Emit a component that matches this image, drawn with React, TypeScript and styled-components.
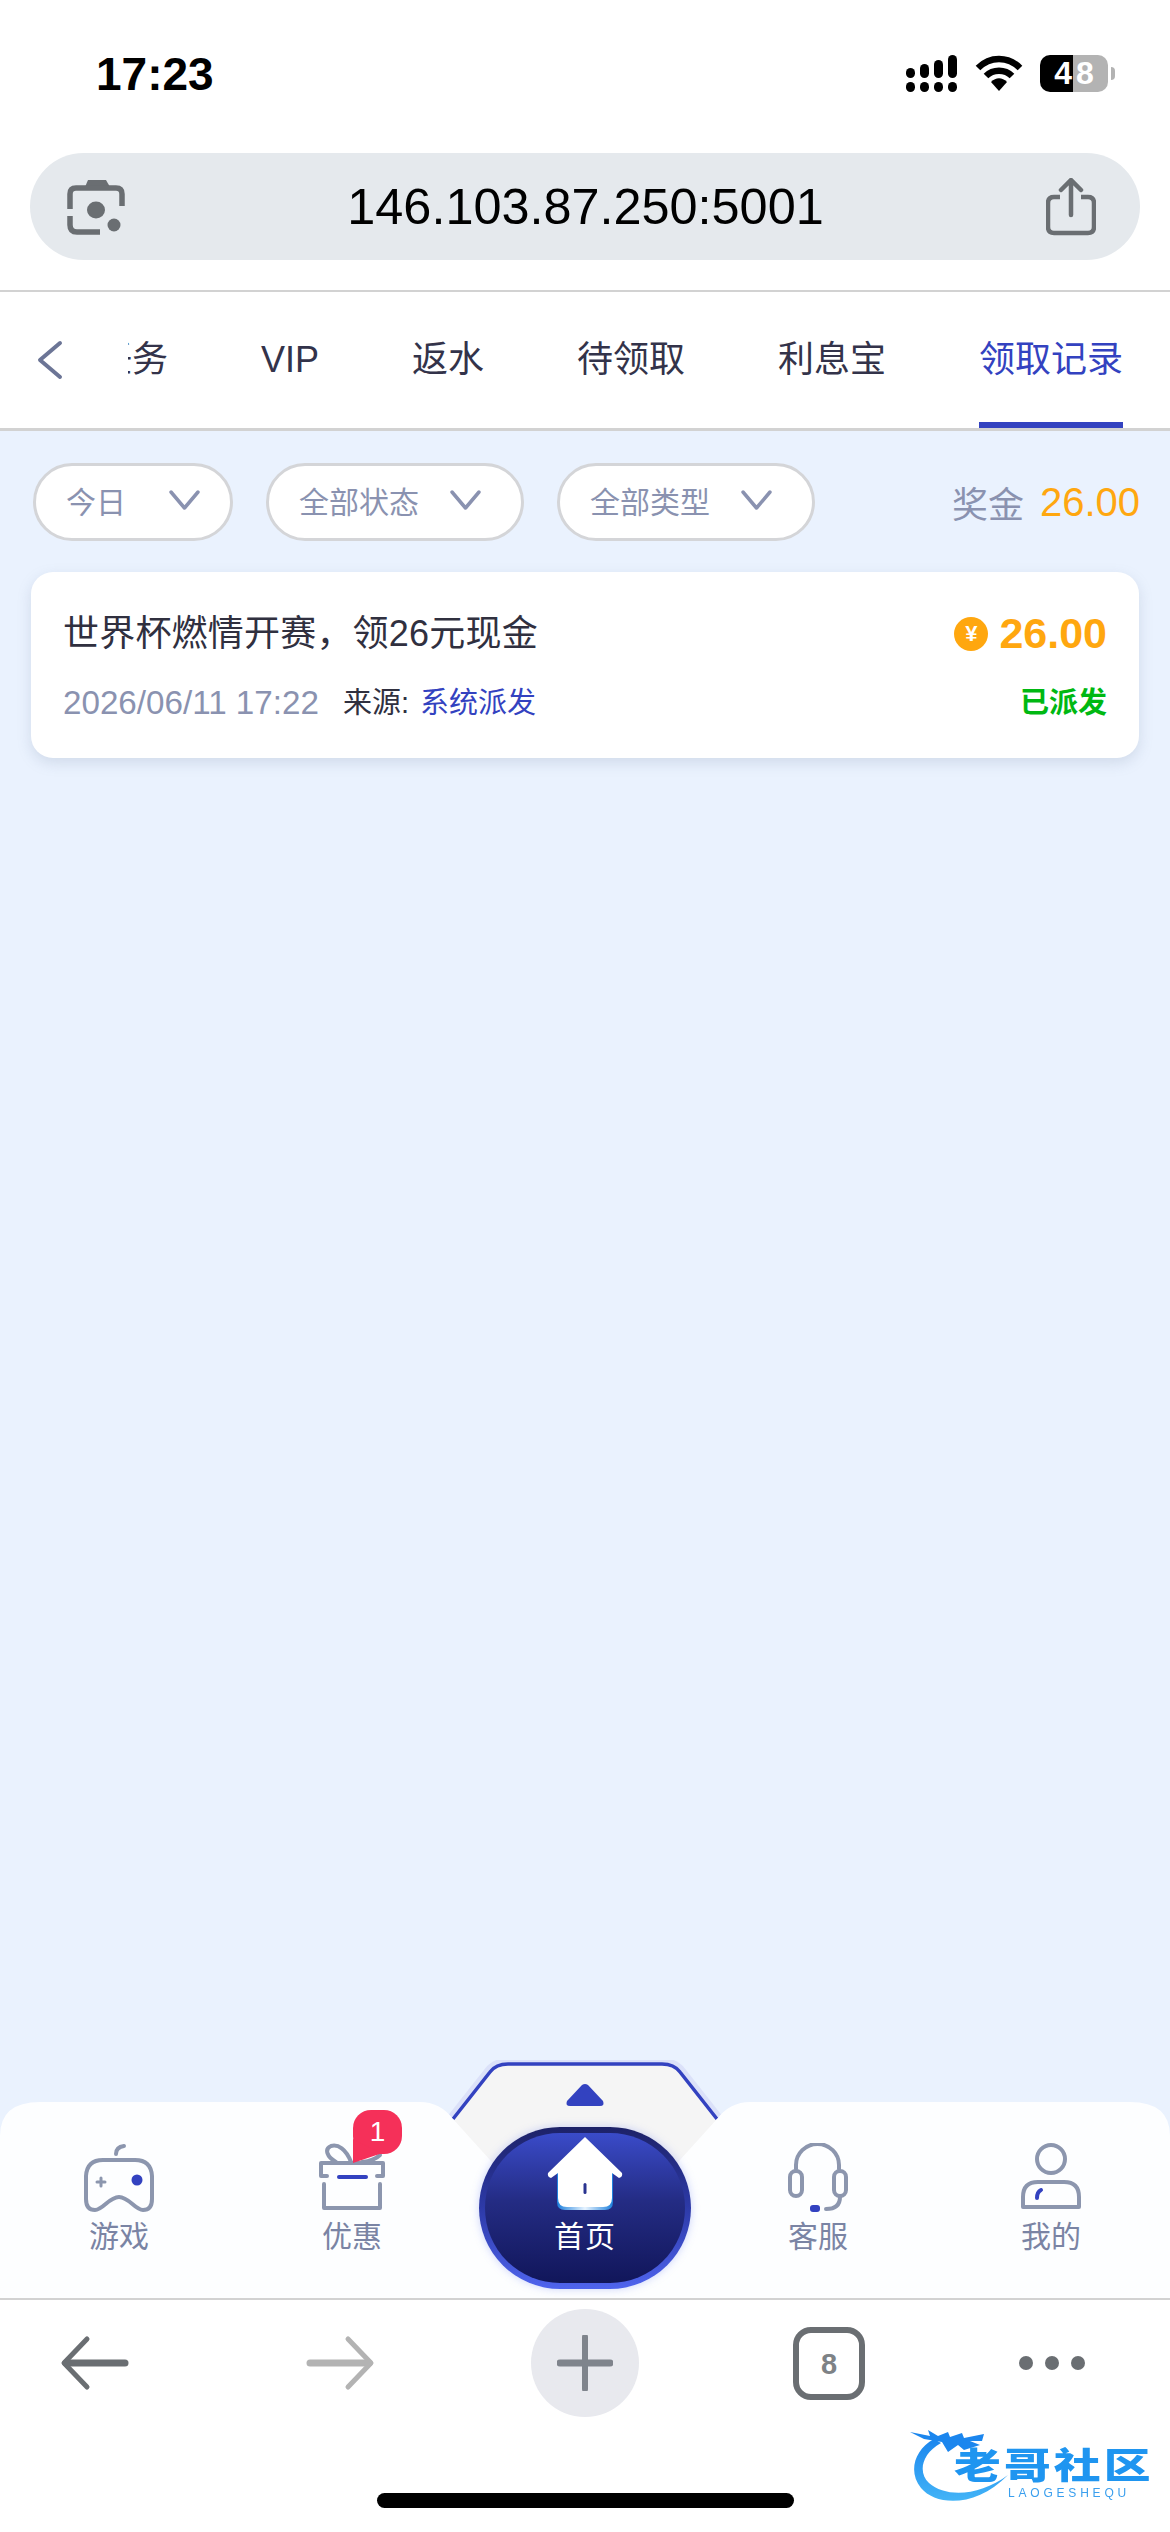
import React from 'react'
import styled, { createGlobalStyle } from 'styled-components'

const FONT = `"Liberation Sans", "Noto Sans CJK SC", sans-serif`

const GlobalStyle = createGlobalStyle`
  html, body {
    margin: 0;
    padding: 0;
    background: #eaf2fe;
  }
  * {
    box-sizing: border-box;
  }
`

const Page = styled.div`
  width: 1170px;
  height: 2532px;
  display: flex;
  flex-direction: column;
  overflow: hidden;
  background: #eaf2fe;
  font-family: ${FONT};
`

const BrowserTop = styled.header`
  height: 292px;
  flex-shrink: 0;
  background: #fff;
  border-bottom: 2px solid #d2d2d2;
  padding: 0 30px;
`

const StatusBar = styled.div`
  height: 153px;
  display: flex;
  justify-content: space-between;
  padding: 46px 25px 0 66px;
`

const Time = styled.div`
  font-size: 46px;
  font-weight: 700;
  line-height: 56px;
  color: #000;
`

const StatusIcons = styled.div`
  display: flex;
  align-items: flex-start;
  gap: 17px;
  padding-top: 9px;
`

const BatteryBox = styled.div`
  position: relative;
  width: 68px;
  height: 37px;
  padding-left: 4px;
  border-radius: 10px;
  overflow: hidden;
  background: linear-gradient(to right, #000 33px, #b3b3b3 33px);
  color: #fff;
  font-size: 32px;
  font-weight: 700;
  line-height: 37px;
  letter-spacing: 4px;
  text-align: center;
`

const BatteryNub = styled.div`
  width: 4px;
  height: 13px;
  margin: 12px 0 0 -14px;
  border-radius: 0 4px 4px 0;
  background: #b3b3b3;
`

const UrlBar = styled.div`
  height: 107px;
  border-radius: 54px;
  background: #e5e9ed;
  display: flex;
  align-items: center;
  justify-content: space-between;
  padding: 0 44px 0 37px;
`

const UrlText = styled.div`
  font-size: 50.4px;
  color: #000;
  line-height: 60px;
`

const TabsRow = styled.nav`
  height: 139px;
  flex-shrink: 0;
  background: #fff;
  border-bottom: 3px solid #d2d2d2;
  display: flex;
`

const BackSlot = styled.div`
  width: 128px;
  flex-shrink: 0;
  padding: 48px 0 0 36px;
`

const TabStrip = styled.div`
  flex: 1;
  min-width: 0;
  display: flex;
  justify-content: flex-end;
  gap: 93px;
  padding-right: 47px;
  overflow: hidden;
`

const Tab = styled.div<{ $active?: boolean }>`
  flex-shrink: 0;
  height: 136px;
  line-height: 136px;
  font-size: 36px;
  white-space: nowrap;
  color: ${(p) => (p.$active ? '#3342c0' : '#33334a')};
  border-bottom: 6px solid ${(p) => (p.$active ? '#3342c0' : 'transparent')};
`

const Content = styled.main`
  flex: 1;
  min-height: 0;
  padding: 32px 31px 0 31px;
`

const FilterRow = styled.div`
  display: flex;
  align-items: center;
  gap: 33px;
  height: 78px;
  margin-left: 2px;
`

const FilterPill = styled.div<{ $width: number; $endPad: number }>`
  width: ${(p) => p.$width}px;
  height: 78px;
  border: 3px solid #d4d5d8;
  border-radius: 39px;
  background: #fff;
  display: flex;
  align-items: center;
  justify-content: space-between;
  padding: 0 ${(p) => p.$endPad}px 4px 30px;
  font-size: 30px;
  color: #8a92b0;
`

const BonusBox = styled.div`
  margin-left: auto;
  display: flex;
  align-items: center;
  gap: 16px;
  margin-right: -1px;
`

const BonusLabel = styled.span`
  font-size: 36px;
  color: #8a92b0;
`

const BonusValue = styled.span`
  font-size: 40px;
  color: #ffa70f;
`

const Card = styled.section`
  margin-top: 31px;
  height: 186px;
  border-radius: 22px;
  background: #fff;
  box-shadow: 0 5px 14px rgba(120, 135, 165, 0.22);
  padding: 37px 32px 0 32px;
`

const CardRow = styled.div`
  display: flex;
  align-items: center;
  justify-content: space-between;
`

const CardTitle = styled.div`
  font-size: 36px;
  line-height: 48px;
  letter-spacing: 0.2px;
  color: #30303f;
`

const Amount = styled.div`
  display: flex;
  align-items: center;
  gap: 11px;
  font-size: 43px;
  font-weight: 700;
  color: #ffa70f;
`

const Coin = styled.span`
  width: 34px;
  height: 34px;
  border-radius: 50%;
  background: #ffa70f;
  color: #fff;
  font-size: 22px;
  line-height: 34px;
  text-align: center;
`

const MetaRow = styled(CardRow)`
  margin-top: 23px;
  font-size: 29px;
  line-height: 44px;
`

const MetaLeft = styled.div`
  display: flex;
  gap: 24px;
`

const DateText = styled.span`
  font-size: 33.2px;
  color: #8a92b0;
`

const SourceLabel = styled.span`
  color: #30303f;
`

const SourceValue = styled.span`
  margin-left: 3px;
  color: #3342c0;
`

const StateText = styled.span`
  color: #00b812;
  font-weight: 700;
`

const TabBar = styled.div`
  position: relative;
  height: 238px;
  flex-shrink: 0;
  display: grid;
  grid-template-columns: repeat(5, 233px);
  justify-content: center;
`

const TabBarShape = styled.svg`
  position: absolute;
  left: 0;
  top: 0;
`

const NavItem = styled.div`
  position: relative;
  display: flex;
  flex-direction: column;
  align-items: center;
  justify-content: flex-end;
  padding-bottom: 41px;
  font-size: 30px;
  line-height: 40px;
  color: #7a84a4;
`

const NavIcon = styled.div`
  position: relative;
  width: 72px;
  height: 72px;
  margin-bottom: 2px;
`

const Badge = styled.div`
  position: absolute;
  left: 37px;
  top: -33px;
  width: 49px;
  height: 44px;
  border-radius: 18px;
  background: #f53059;
  color: #fff;
  font-size: 28px;
  line-height: 44px;
  text-align: center;

  &::after {
    content: '';
    position: absolute;
    left: 0;
    bottom: -9px;
    width: 28px;
    height: 24px;
    background: #f53059;
    clip-path: polygon(0 0, 100% 60%, 0 100%);
  }
`

const HomeWrap = styled.div`
  position: relative;
  display: flex;
  align-items: flex-end;
  justify-content: center;
  padding-bottom: 9px;
`

const HomeOuter = styled.div`
  width: 212px;
  height: 162px;
  padding: 6px;
  border-radius: 82px;
  background: linear-gradient(to bottom, #1d2268 0%, #2d3aa8 50%, #4f64ee 100%);
  box-shadow: 0 0 8px rgba(110, 130, 240, 0.35);
`

const HomeInner = styled.div`
  height: 100%;
  border-radius: 76px;
  background: linear-gradient(to bottom, #3a4bc9 0%, #242c84 45%, #11165a 100%);
  display: flex;
  flex-direction: column;
  align-items: center;
  padding-top: 3px;
  font-size: 30px;
  line-height: 40px;
  color: #fff;
  letter-spacing: 1px;
`

const HomeLabel = styled.div`
  margin-top: 7px;
`

const BrowserBottom = styled.footer`
  position: relative;
  height: 234px;
  flex-shrink: 0;
  background: #fff;
  border-top: 2px solid #d2d2d2;
  padding: 9px 0 0 0;
`

const ActionRow = styled.div`
  display: flex;
  align-items: center;
  height: 108px;
`

const ActionSlot = styled.div<{ $width: number }>`
  width: ${(p) => p.$width}px;
  flex-shrink: 0;
  display: flex;
  align-items: center;
  justify-content: center;
`

const PlusCircle = styled.div`
  width: 108px;
  height: 108px;
  border-radius: 50%;
  background: #e8e9ee;
  display: flex;
  align-items: center;
  justify-content: center;
`

const TabCount = styled.div`
  width: 72px;
  height: 73px;
  border: 6px solid #6a6e72;
  border-radius: 18px;
  font-size: 29px;
  font-weight: 700;
  line-height: 62px;
  color: #7e8286;
  text-align: center;
`

const Dots = styled.div`
  display: flex;
  gap: 12px;
`

const Dot = styled.span`
  width: 14px;
  height: 14px;
  border-radius: 50%;
  background: #6a6e72;
`

const HomeIndicator = styled.div`
  position: absolute;
  left: 377px;
  top: 193px;
  width: 417px;
  height: 15px;
  border-radius: 8px;
  background: #000;
`

const Logo = styled.div`
  position: absolute;
  left: 908px;
  top: 128px;
  width: 244px;
  height: 78px;
  filter: blur(0.7px);
`

const LogoName = styled.div`
  position: absolute;
  left: 46px;
  top: 20px;
  font-size: 36px;
  font-weight: 900;
  line-height: 38px;
  letter-spacing: 2.4px;
  white-space: nowrap;
  color: #1f95f0;
  transform: scaleX(1.3);
  transform-origin: left center;
`

const LogoSub = styled.div`
  position: absolute;
  left: 100px;
  top: 58px;
  font-size: 12px;
  line-height: 14px;
  letter-spacing: 3.8px;
  color: #3a9fee;
`

function SignalIcon() {
  return (
    <svg width="52" height="38" viewBox="0 0 52 38" fill="#000">
      <rect x="0" y="13" width="9" height="10" rx="4.5" />
      <rect x="14" y="9" width="9" height="14" rx="4.5" />
      <rect x="28" y="5" width="9" height="18" rx="4.5" />
      <rect x="42" y="0" width="9" height="23" rx="4.5" />
      <rect x="0" y="27" width="9" height="10" rx="4.5" />
      <rect x="14" y="27" width="9" height="10" rx="4.5" />
      <rect x="28" y="27" width="9" height="10" rx="4.5" />
      <rect x="42" y="27" width="9" height="10" rx="4.5" />
    </svg>
  )
}

function WifiIcon() {
  return (
    <svg width="48" height="37" viewBox="0 0 48 37">
      <path d="M3 13 C15 1 33 1 45 13" fill="none" stroke="#000" strokeWidth="6.5" />
      <path d="M11 21 C18 14 30 14 37 21" fill="none" stroke="#000" strokeWidth="6.5" />
      <path d="M16 27 C21 22 27 22 32 27 L24 36 Z" fill="#000" />
    </svg>
  )
}

function LensIcon() {
  return (
    <svg width="58" height="56" viewBox="0 0 58 56" fill="none" stroke="#6a6e72" strokeWidth="5.5">
      <path d="M18 8 L21 1 H39 L43 8 Z" fill="#6a6e72" stroke="none" />
      <path d="M3 30 V15 Q3 9 9 9 H49 Q55 9 55 15 V27" />
      <path d="M3 37 V46 Q3 53 10 53 H33" />
      <ellipse cx="29" cy="31" rx="9" ry="8.5" fill="#6a6e72" stroke="none" />
      <circle cx="47" cy="46" r="6.5" fill="#6a6e72" stroke="none" />
    </svg>
  )
}

function ShareIcon() {
  return (
    <svg width="50" height="58" viewBox="0 0 50 58" fill="none" stroke="#6a6e72" strokeWidth="4.5">
      <path d="M14 19 H8 Q2 19 2 25 V49 Q2 55 8 55 H42 Q48 55 48 49 V25 Q48 19 42 19 H35" />
      <path d="M25 37 V3 M15 12 L25 2 L35 12" strokeLinecap="round" />
    </svg>
  )
}

function TabChevron() {
  return (
    <svg width="28" height="40" viewBox="0 0 28 40" fill="none" stroke="#6c7596" strokeWidth="4" strokeLinecap="round" strokeLinejoin="round">
      <path d="M24 3 L4 20 L24 37" />
    </svg>
  )
}

function PillChevron() {
  return (
    <svg width="31" height="22" viewBox="0 0 31 22" fill="none" stroke="#8a92b0" strokeWidth="3.5" strokeLinecap="round" strokeLinejoin="round">
      <path d="M2 3 L15.5 19 L29 3" />
    </svg>
  )
}

const navStroke = {
  fill: 'none',
  stroke: '#8c96ae',
  strokeWidth: 4,
  strokeLinecap: 'round' as const,
  strokeLinejoin: 'round' as const,
}

function GameIcon() {
  return (
    <svg width="72" height="72" viewBox="0 0 72 72" {...navStroke}>
      <path d="M20 17 H52 Q68 17 69 33 V56 Q69 67 60 67 C52 67 46 54 36 54 C26 54 20 67 12 67 Q3 67 3 56 V33 Q4 17 20 17 Z" />
      <path d="M33 11 Q33 4 41 3" />
      <path d="M18 35 V43 M14 39 H22" strokeWidth="3" />
      <circle cx="54" cy="37" r="5.5" fill="#3342c0" stroke="none" />
    </svg>
  )
}

function GiftIcon() {
  return (
    <svg width="72" height="72" viewBox="0 0 72 72" {...navStroke}>
      <path d="M35 19 C30 6 22 1 15 3 C8 6 11 14 20 19" />
      <path d="M46 19 Q58 18 64 12" />
      <path d="M11 33 H5 V20 H67 V33 H61" />
      <path d="M23 34 H50" stroke="#3342c0" />
      <path d="M8 41 V65 H64 V41" />
    </svg>
  )
}

function HeadsetIcon() {
  return (
    <svg width="72" height="72" viewBox="0 0 72 72" {...navStroke}>
      <path d="M14 26 V22 A21.5 21 0 0 1 57 22 V26" />
      <rect x="8" y="28" width="12" height="25" rx="6" />
      <rect x="52" y="28" width="12" height="25" rx="6" />
      <path d="M58 54 Q58 66 44 66" />
      <rect x="28" y="62" width="10" height="7" rx="3" fill="#3342c0" stroke="none" />
    </svg>
  )
}

function UserIcon() {
  return (
    <svg width="72" height="72" viewBox="0 0 72 72" {...navStroke}>
      <circle cx="36" cy="16" r="14" />
      <path d="M8 64 V54 Q8 39 23 39 H49 Q64 39 64 54 V64 Z" />
      <path d="M22 55 Q22 49 26 47" stroke="#3342c0" />
    </svg>
  )
}

function HouseIcon() {
  return (
    <svg width="80" height="74" viewBox="0 0 80 74">
      <defs>
        <linearGradient id="houseGlow" x1="0" y1="0" x2="1" y2="0">
          <stop offset="0" stopColor="#1c7fdc" />
          <stop offset="0.5" stopColor="#e8f4ff" />
          <stop offset="1" stopColor="#1c7fdc" />
        </linearGradient>
      </defs>
      <path d="M12 34 V66 Q12 74 20 74 H60 Q68 74 68 66 V34 Z" fill="url(#houseGlow)" />
      <path d="M40 1 L77 37 Q78 41 74 42 L67 37 V62 Q67 71 58 71 H22 Q13 71 13 62 V37 L6 42 Q2 41 3 37 Z" fill="#fff" />
      <rect x="38.5" y="47" width="3" height="11" rx="1.5" fill="#2a3490" />
    </svg>
  )
}

function ArrowIcon({ flip, color }: { flip?: boolean; color: string }) {
  return (
    <svg width="70" height="56" viewBox="0 0 70 56" fill="none" stroke={color} strokeLinecap="round" strokeLinejoin="round" style={flip ? { transform: 'scaleX(-1)' } : undefined}>
      <path d="M27 4 L4 28 L27 52" strokeWidth="5" />
      <path d="M6 28 H65" strokeWidth="7" />
    </svg>
  )
}

function LogoMark() {
  return (
    <svg width="120" height="78" viewBox="0 0 120 78">
      <defs>
        <linearGradient id="logoBlue" x1="0" y1="0" x2="0" y2="1">
          <stop offset="0" stopColor="#1b86ee" />
          <stop offset="1" stopColor="#43b4f7" />
        </linearGradient>
      </defs>
      <path d="M26 11 C6 22 0 44 13 60 C28 78 68 80 100 47 C72 68 38 70 21 55 C10 45 13 26 33 15 Z" fill="url(#logoBlue)" />
      <path d="M2 4 L22 8 L20 2 L30 8 L40 4 L42 9 L54 5 L56 10 L76 6 L74 13 L62 13 L72 17 L56 22 L50 17 L40 24 L34 14 L16 11 Z" fill="#1b86ee" />
    </svg>
  )
}

export default function App() {
  return (
    <Page>
      <GlobalStyle />
      <BrowserTop>
        <StatusBar>
          <Time>17:23</Time>
          <StatusIcons>
            <SignalIcon />
            <WifiIcon />
            <BatteryBox>48</BatteryBox>
            <BatteryNub />
          </StatusIcons>
        </StatusBar>
        <UrlBar>
          <LensIcon />
          <UrlText>146.103.87.250:5001</UrlText>
          <ShareIcon />
        </UrlBar>
      </BrowserTop>

      <TabsRow>
        <BackSlot>
          <TabChevron />
        </BackSlot>
        <TabStrip>
          <Tab>任务</Tab>
          <Tab>VIP</Tab>
          <Tab>返水</Tab>
          <Tab>待领取</Tab>
          <Tab>利息宝</Tab>
          <Tab $active>领取记录</Tab>
        </TabStrip>
      </TabsRow>

      <Content>
        <FilterRow>
          <FilterPill $width={200} $endPad={30}>
            今日
            <PillChevron />
          </FilterPill>
          <FilterPill $width={258} $endPad={40}>
            全部状态
            <PillChevron />
          </FilterPill>
          <FilterPill $width={258} $endPad={40}>
            全部类型
            <PillChevron />
          </FilterPill>
          <BonusBox>
            <BonusLabel>奖金</BonusLabel>
            <BonusValue>26.00</BonusValue>
          </BonusBox>
        </FilterRow>

        <Card>
          <CardRow>
            <CardTitle>世界杯燃情开赛，领26元现金</CardTitle>
            <Amount>
              <Coin>¥</Coin>
              26.00
            </Amount>
          </CardRow>
          <MetaRow>
            <MetaLeft>
              <DateText>2026/06/11 17:22</DateText>
              <span>
                <SourceLabel>来源: </SourceLabel>
                <SourceValue>系统派发</SourceValue>
              </span>
            </MetaLeft>
            <StateText>已派发</StateText>
          </MetaRow>
        </Card>
      </Content>

      <TabBar>
        <TabBarShape width="1170" height="238" viewBox="0 0 1170 238">
          <path d="M453 59 L490 12 Q496 4 508 4 H662 Q674 4 680 12 L717 59" fill="none" stroke="#c9cdf5" strokeWidth="12" opacity="0.45" />
          <path d="M453 59 L490 12 Q496 4 508 4 H662 Q674 4 680 12 L717 59 L680 115 H490 Z" fill="#f5f5f5" />
          <path d="M453 59 L490 12 Q496 4 508 4 H662 Q674 4 680 12 L717 59" fill="none" stroke="#3342c0" strokeWidth="3.5" />
          <path d="M582 25 Q585 23 588 25 L603 41 Q605 46 600 46 H570 Q565 46 567 41 Z" fill="#3342c0" />
          <path d="M0 238 V76 Q0 42 40 42 H420 Q440 42 453 59 L500 111 V238 Z" fill="#fdfeff" />
          <path d="M1170 238 V76 Q1170 42 1130 42 H750 Q730 42 717 59 L670 111 V238 Z" fill="#fdfeff" />
          <rect x="499" y="115" width="172" height="123" fill="#fdfeff" />
        </TabBarShape>
        <NavItem>
          <NavIcon>
            <GameIcon />
          </NavIcon>
          游戏
        </NavItem>
        <NavItem>
          <NavIcon>
            <GiftIcon />
            <Badge>1</Badge>
          </NavIcon>
          优惠
        </NavItem>
        <HomeWrap>
          <HomeOuter>
            <HomeInner>
              <HouseIcon />
              <HomeLabel>首页</HomeLabel>
            </HomeInner>
          </HomeOuter>
        </HomeWrap>
        <NavItem>
          <NavIcon>
            <HeadsetIcon />
          </NavIcon>
          客服
        </NavItem>
        <NavItem>
          <NavIcon>
            <UserIcon />
          </NavIcon>
          我的
        </NavItem>
      </TabBar>

      <BrowserBottom>
        <ActionRow>
          <ActionSlot $width={190}>
            <ArrowIcon color="#6a6e72" />
          </ActionSlot>
          <ActionSlot $width={300}>
            <ArrowIcon flip color="#b3b3b3" />
          </ActionSlot>
          <ActionSlot $width={190}>
            <PlusCircle>
              <svg width="56" height="56" viewBox="0 0 56 56" stroke="#7f848c" strokeLinecap="round">
                <path d="M28 2 V54" strokeWidth="6" />
                <path d="M3 28 H53" strokeWidth="7" />
              </svg>
            </PlusCircle>
          </ActionSlot>
          <ActionSlot $width={298}>
            <TabCount>8</TabCount>
          </ActionSlot>
          <ActionSlot $width={148}>
            <Dots>
              <Dot />
              <Dot />
              <Dot />
            </Dots>
          </ActionSlot>
        </ActionRow>
        <Logo>
          <LogoMark />
          <LogoName>老哥社区</LogoName>
          <LogoSub>LAOGESHEQU</LogoSub>
        </Logo>
        <HomeIndicator />
      </BrowserBottom>
    </Page>
  )
}
